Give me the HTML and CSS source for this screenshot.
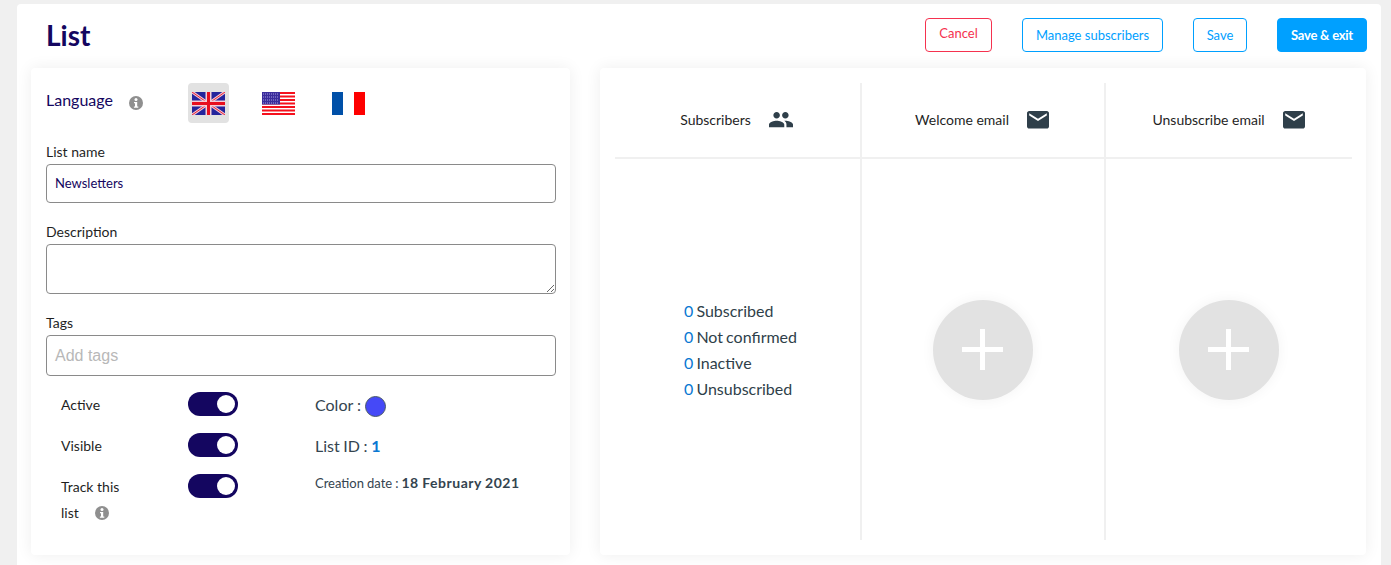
FILE: index.html
```html
<!DOCTYPE html>
<html lang="en">
<head>
<meta charset="utf-8">
<title>List</title>
<link rel="stylesheet" href="styles.css">
</head>
<body>
<main class="page">
  <header class="topbar">
    <h1 class="title">List</h1>
    <div class="actions">
      <button class="btn btn-cancel">Cancel</button>
      <button class="btn btn-outline btn-manage">Manage subscribers</button>
      <button class="btn btn-outline btn-save">Save</button>
      <button class="btn btn-primary">Save &amp; exit</button>
    </div>
  </header>
  <div class="panels">
    <section class="card form-card">
      <div class="lang-row">
        <span class="lang-label">Language</span>
        <svg class="info info-lang" viewBox="0 0 14 14"><circle cx="7" cy="7" r="7" fill="#8f8f8f"/><circle cx="7" cy="3.600" r="1.500" fill="#fff"/><path d="M5 6h3.200v4.400H9.300v1.300H4.900v-1.300H6V7.300H5z" fill="#fff"/></svg>
        <div class="flags">
          <span class="flag-box active">
            <svg class="flag" width="33" height="23" viewBox="0 0 33 23"><rect width="33" height="23" fill="#24249c"/><path d="M0 0L33 23M33 0L0 23" stroke="#f4c8d0" stroke-width="3"/><path d="M0 0L33 23M33 0L0 23" stroke="#e8203a" stroke-width="1"/><path d="M16.500 0V23M0 11.500H33" stroke="#f4d0d8" stroke-width="6"/><path d="M16.500 0V23M0 11.500H33" stroke="#e80f1f" stroke-width="3"/></svg>
          </span>
          <span class="flag-box">
            <svg class="flag" width="33" height="23" viewBox="0 0 33 23"><rect width="33" height="23" fill="#fff"/><path d="M0 1h33M0 4.500h33M0 8h33M0 11.500h33M0 15h33M0 18.500h33M0 22h33" stroke="#f5111d" stroke-width="1.800"/><rect width="18" height="12.500" fill="#3a2d9c"/><path d="M1 2h16M1 5h16M1 8h16M1 11h16" stroke="#a79ede" stroke-width="1" stroke-dasharray="1 1"/></svg>
          </span>
          <span class="flag-box">
            <svg class="flag" width="33" height="23" viewBox="0 0 33 23"><rect width="33" height="23" fill="#fff"/><rect width="11" height="23" fill="#0050a8"/><rect x="22" width="11" height="23" fill="#fe0000"/></svg>
          </span>
        </div>
      </div>

      <label class="field-label label-name">List name</label>
      <div class="input input-name">Newsletters</div>
      <label class="field-label label-desc">Description</label>
      <div class="input input-desc">
        <svg class="grip" width="8" height="8" viewBox="0 0 8 8"><path d="M1 8L8 1M5 8L8 5" stroke="#666" stroke-width="1"/></svg>
      </div>
      <label class="field-label label-tags">Tags</label>
      <div class="input input-tags">Add tags</div>

      <div class="settings">
        <div class="toggles">
          <div class="toggle-row">
            <span class="toggle-label">Active</span>
            <span class="switch"></span>
          </div>
          <div class="toggle-row">
            <span class="toggle-label">Visible</span>
            <span class="switch"></span>
          </div>
          <div class="toggle-row">
            <span class="toggle-label toggle-long">Track this<br>list
              <svg class="info info-track" viewBox="0 0 14 14"><circle cx="7" cy="7" r="7" fill="#8f8f8f"/><circle cx="7" cy="3.600" r="1.500" fill="#fff"/><path d="M5 6h3.200v4.400H9.300v1.300H4.900v-1.300H6V7.300H5z" fill="#fff"/></svg>
            </span>
            <span class="switch"></span>
          </div>
        </div>
        <div class="meta">
          <div class="meta-color">Color : <span class="swatch"></span></div>
          <div class="meta-id">List ID : <b class="blue">1</b></div>
          <div class="meta-date">Creation date : <b>18 February 2021</b></div>
        </div>
      </div>
    </section>

    <section class="card stats-card">
      <div class="stats-grid">
        <div class="col-head col-1">
          <span class="head-text">Subscribers</span>
          <svg class="head-icon" width="24" height="15.300" viewBox="1 5 22 14"><path fill="#2f3f4a" d="M16 11c1.660 0 2.990-1.340 2.990-3S17.660 5 16 5c-1.660 0-3 1.340-3 3s1.340 3 3 3zm-8 0c1.660 0 2.990-1.340 2.990-3S9.660 5 8 5C6.340 5 5 6.340 5 8s1.340 3 3 3zm0 2c-2.330 0-7 1.170-7 3.500V19h14v-2.500c0-2.330-4.670-3.500-7-3.500zm8 0c-.29 0-.62.02-.97.05 1.160.84 1.970 1.970 1.970 3.450V19h6v-2.500c0-2.330-4.670-3.500-7-3.500z"/></svg>
        </div>
        <div class="col-head col-2">
          <span class="head-text">Welcome email</span>
          <svg class="head-icon" width="22" height="17.600" viewBox="2 4 20 16"><path fill="#2f3f4a" d="M20 4H4c-1.100 0-2 .9-2 2v12c0 1.100.9 2 2 2h16c1.100 0 2-.9 2-2V6c0-1.100-.9-2-2-2zm0 4l-8 5-8-5V6l8 5 8-5v2z"/></svg>
        </div>
        <div class="col-head col-3">
          <span class="head-text">Unsubscribe email</span>
          <svg class="head-icon" width="22" height="17.600" viewBox="2 4 20 16"><path fill="#2f3f4a" d="M20 4H4c-1.100 0-2 .9-2 2v12c0 1.100.9 2 2 2h16c1.100 0 2-.9 2-2V6c0-1.100-.9-2-2-2zm0 4l-8 5-8-5V6l8 5 8-5v2z"/></svg>
        </div>
        <div class="col-body col-1 col-counts">
          <ul class="counts">
            <li><span class="num">0</span> Subscribed</li>
            <li><span class="num">0</span> Not confirmed</li>
            <li><span class="num">0</span> Inactive</li>
            <li><span class="num">0</span> Unsubscribed</li>
          </ul>
        </div>
        <div class="col-body col-2"><span class="add"></span></div>
        <div class="col-body col-3"><span class="add"></span></div>
      </div>
    </section>
  </div>
</main>
</body>
</html>
```
FILE: styles.css
```css
* { box-sizing: border-box; }
html, body { margin: 0; height: 565px; overflow: hidden; }
body {
  background: #f0f0f0;
  font-family: Lato, "Liberation Sans", sans-serif;
  color: #2f3f4a;
}
.page {
  margin: 4px 10px 0 17px;
  height: 561px;
  background: #fff;
  border-radius: 4px 4px 0 0;
  padding: 0 15px 0 14px;
}
.topbar {
  height: 64px;
  display: flex;
  justify-content: space-between;
  padding-left: 15px;
}
.title {
  margin: 13px 0 0;
  font-size: 28px;
  line-height: 36px;
  font-weight: 700;
  color: #140660;
}
.actions {
  display: flex;
  align-items: flex-start;
  padding-top: 14px;
  margin-right: -1px;
}
.btn {
  height: 34px;
  border-radius: 4px;
  font-family: inherit;
  font-size: 13px;
  background: #fff;
  padding: 0;
}
.btn-cancel {
  width: 67px;
  margin-right: 30px;
  border: 1px solid #f5324f;
  color: #f5324f;
  padding-bottom: 5px;
}
.btn-outline { border: 1px solid #00a0ff; color: #00a0ff; }
.btn-manage { width: 141px; margin-right: 30px; }
.btn-save { width: 54px; margin-right: 30px; }
.btn-primary {
  width: 90px;
  border: 1px solid #00a0ff;
  background: #00a0ff;
  color: #fff;
  font-weight: 700;
  letter-spacing: -.25px;
}
.panels {
  display: flex;
  justify-content: space-between;
}
.card {
  height: 487px;
  background: #fff;
  border-radius: 4px;
  box-shadow: 0 0 16px rgba(0, 0, 0, .07);
}
.form-card {
  width: 539px;
  padding: 15px 15px 0;
}
.lang-row {
  display: flex;
  align-items: center;
  height: 40px;
}
.lang-label {
  width: 83px;
  font-size: 16px;
  color: #140660;
  position: relative;
  top: -4px;
}
.info { width: 14px; height: 14px; display: inline-block; }
.info-lang { margin-right: 45px; }
.flags { display: flex; gap: 29px; }
.flag-box {
  width: 41px;
  height: 40px;
  border-radius: 4px;
  display: flex;
  align-items: center;
  justify-content: center;
}
.flag-box.active { background: #e2e2e2; }
.field-label {
  display: block;
  font-size: 14px;
  line-height: 17px;
  color: #1f1f1f;
}
.label-name { margin-top: 20px; }
.label-desc { margin-top: 20px; }
.label-tags { margin-top: 20px; }
.input {
  width: 510px;
  margin-top: 4px;
  border: 1px solid #8a8a8a;
  border-radius: 4px;
  background: #fff;
  padding-left: 8px;
  position: relative;
}
.input-name {
  height: 39px;
  line-height: 37px;
  font-size: 13px;
  color: #140660;
}
.input-desc { height: 50px; }
.input-tags {
  height: 41px;
  line-height: 39px;
  font-size: 16px;
  color: #b8b8b8;
  font-family: "Liberation Sans", sans-serif;
}
.grip { position: absolute; right: 1px; bottom: 1px; }
.settings {
  display: flex;
  padding-left: 15px;
  margin-top: 16px;
}
.toggles { width: 254px; }
.toggle-row {
  display: flex;
  width: 177px;
  justify-content: space-between;
  align-items: flex-start;
  height: 41px;
}
.toggle-label {
  font-size: 14px;
  line-height: 26px;
  color: #1f1f1f;
}
.toggle-long { width: 70px; }
.info-track { margin-left: 13px; vertical-align: -2px; }
.switch {
  width: 50px;
  height: 24px;
  border-radius: 12px;
  background: #140660;
  position: relative;
  flex: none;
}
.switch::after {
  content: "";
  position: absolute;
  top: 3px;
  right: 3px;
  width: 18px;
  height: 18px;
  border-radius: 50%;
  background: #fff;
}
.meta { font-size: 16px; color: #34444f; }
.meta-color {
  display: flex;
  align-items: center;
  height: 24px;
  gap: 4px;
}
.swatch {
  width: 21px;
  height: 21px;
  margin-top: 4px;
  border-radius: 50%;
  background: #4549f7;
  border: 1px solid #4a5a66;
}
.meta-id { margin-top: 21px; line-height: 18px; word-spacing: -.5px; }
.blue { color: #0a78d2; }
.meta-date { margin-top: 19px; font-size: 13px; line-height: 18px; word-spacing: -.3px; }
.meta-date b { font-size: 14px; letter-spacing: .5px; }
.stats-card {
  width: 766px;
  padding: 15px 14px 15px 15px;
}
.stats-grid {
  height: 457px;
  display: grid;
  grid-template-columns: 247px 244px 246px;
  grid-template-rows: 76px 1fr;
}
.col-head {
  display: flex;
  align-items: center;
  justify-content: center;
  gap: 18px;
  font-size: 14px;
  color: #1f1f1f;
  border-bottom: 2px solid #f0f0f0;
}
.col-1, .col-2 { border-right: 2px solid #f0f0f0; }
.col-head.col-1, .col-head.col-2 { padding-right: 2px; }
.col-head.col-3 { padding-right: 1px; }
.head-text { margin-bottom: 2px; }
.head-icon { flex: none; }
.col-body {
  display: flex;
  align-items: center;
  justify-content: center;
}
.col-counts {
  justify-content: flex-start;
  padding-left: 69px;
}
.counts {
  list-style: none;
  margin: 0;
  padding: 0;
  font-size: 16px;
  line-height: 26px;
  word-spacing: -1px;
}
.num { color: #0a78d2; }
.add {
  width: 100px;
  height: 100px;
  border-radius: 50%;
  background: #e2e2e2;
  box-shadow: 0 0 14px rgba(0, 0, 0, .05);
  position: relative;
}
.add::before, .add::after {
  content: "";
  position: absolute;
  background: #fff;
}
.add::before { left: 29px; top: 47px; width: 41px; height: 5px; }
.add::after { left: 47px; top: 29px; width: 5px; height: 41px; }
```
